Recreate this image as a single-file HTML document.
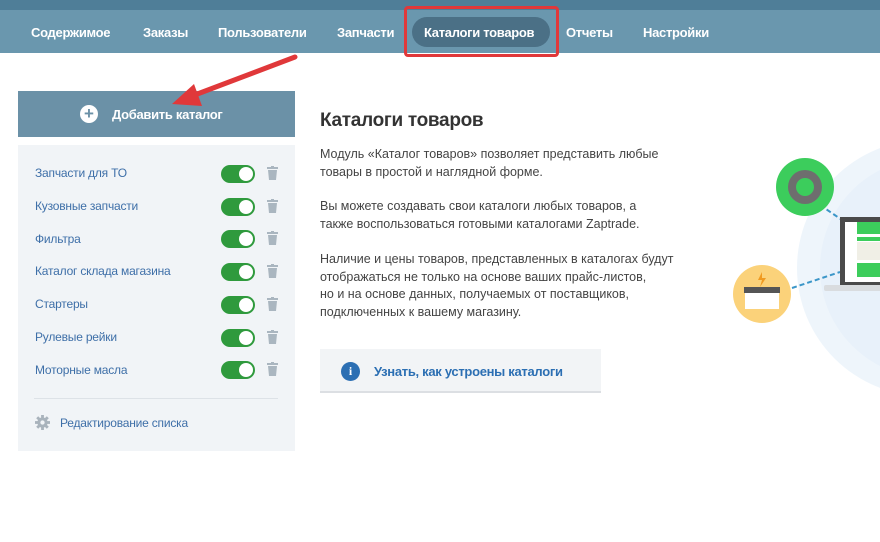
<!DOCTYPE html>
<html><head><meta charset="utf-8"><style>
*{margin:0;padding:0;box-sizing:border-box}
body{width:880px;height:542px;overflow:hidden;background:#fff;font-family:"Liberation Sans",sans-serif;position:relative}
.top{position:absolute;left:0;top:0;width:880px;height:10px;background:#4f7e98}
.nav{position:absolute;left:0;top:10px;width:880px;height:43px;background:#6a97ae}
.nav span{position:absolute;top:15px;color:#fff;font-weight:bold;font-size:13px;letter-spacing:-0.3px}
.pill{position:absolute;left:412px;top:7px;width:138px;height:30px;border-radius:15px;background:#4b7086}
.redbox{position:absolute;left:404px;top:6px;width:155px;height:51px;border:3px solid #e0383a;border-radius:4px}
.addbtn{position:absolute;left:18px;top:91px;width:277px;height:46px;background:#6b91a7;color:#fff;font-weight:bold;font-size:13px}
.addbtn .plus{position:absolute;left:62px;top:14px;width:18px;height:18px;border-radius:50%;background:#fff;color:#6b91a7;font-size:17px;line-height:18px;text-align:center}
.addbtn .t{position:absolute;left:94px;top:16px;letter-spacing:-0.3px}
.panel{position:absolute;left:18px;top:145px;width:277px;height:306px;background:#f1f4f7}
.item{position:absolute;left:17px;font-size:12px;color:#3e6fa8;letter-spacing:-0.2px}
.tg{position:absolute;left:203px;width:34px;height:18px;border-radius:9px;background:#2f9a3d}
.tg:after{content:"";position:absolute;right:2px;top:2px;width:14px;height:14px;border-radius:50%;background:#fff}
.tr{position:absolute;left:249px;width:11px;height:14px}
.sep{position:absolute;left:16px;top:253px;width:244px;height:1px;background:#dde2e7}
h1{position:absolute;left:320px;top:110px;font-size:19px;color:#333;font-weight:bold;letter-spacing:-0.3px}
.p{position:absolute;left:320px;font-size:12.5px;line-height:17.5px;color:#444;letter-spacing:0}
.info{position:absolute;left:320px;top:349px;width:281px;height:44px;background:#f2f4f6;border-bottom:2px solid #dcdfe3}
.info .i{position:absolute;left:21px;top:13px;width:19px;height:19px;border-radius:50%;background:#2c6fb3;color:#fff;font-weight:bold;font-size:12px;text-align:center;line-height:19px;font-family:"Liberation Serif",serif}
.info .t{position:absolute;left:54px;top:15px;color:#2c6fb3;font-weight:bold;font-size:13px;letter-spacing:-0.3px}
</style></head><body>
<div class="top"></div>
<div class="nav">
<div class="pill"></div>
<span style="left:31px">Содержимое</span>
<span style="left:143px">Заказы</span>
<span style="left:218px">Пользователи</span>
<span style="left:337px">Запчасти</span>
<span style="left:424px">Каталоги товаров</span>
<span style="left:566px">Отчеты</span>
<span style="left:643px">Настройки</span>
</div>
<div class="redbox"></div>
<svg style="position:absolute;left:0;top:0" width="880" height="542">
<circle cx="925" cy="268" r="128" fill="#eef5fb"/>
<circle cx="930" cy="268" r="110" fill="#e8f1fa"/>
<line x1="820" y1="205" x2="845" y2="222" stroke="#3b96c8" stroke-width="2" stroke-dasharray="5,3"/>
<line x1="792" y1="288" x2="840" y2="272" stroke="#3b96c8" stroke-width="2" stroke-dasharray="5,3"/>
<circle cx="805" cy="187" r="29" fill="#3ccd5c"/>
<circle cx="805" cy="187" r="17" fill="#6e6e6e"/>
<circle cx="805" cy="187" r="9" fill="#3ccd5c"/>
<circle cx="762" cy="294" r="29" fill="#fbd27a"/>
<rect x="744" y="287" width="36" height="6" fill="#555"/>
<rect x="745" y="293" width="34" height="16" fill="#fff"/>
<path d="M762 272 l-4 8 h4 l-2 7 l6 -9 h-4 z" fill="#f09a20"/>
<rect x="840" y="217" width="50" height="70" fill="#4a4a4a"/>
<rect x="845" y="222" width="45" height="60" fill="#fff"/>
<rect x="857" y="222" width="33" height="12" fill="#3ccd5c"/>
<rect x="857" y="237" width="33" height="4" fill="#3ccd5c"/>
<rect x="857" y="242" width="33" height="18" fill="#f0efe6"/>
<rect x="857" y="263" width="33" height="14" fill="#3ccd5c"/>
<rect x="824" y="285" width="60" height="6" rx="2" fill="#d9dcdf"/>
</svg>
<div class="addbtn"><div class="plus">+</div><div class="t">Добавить каталог</div></div>
<svg style="position:absolute;left:0;top:0" width="320" height="130">
<path d="M295 57 L192 96" stroke="#e0383a" stroke-width="5" stroke-linecap="round"/>
<path d="M172 104 L194 84 L202 106 Z" fill="#e0383a"/>
</svg>
<div class="panel">
<div class="item" style="top:21px">Запчасти для ТО</div>
<div class="item" style="top:54px">Кузовные запчасти</div>
<div class="item" style="top:87px">Фильтра</div>
<div class="item" style="top:119px">Каталог склада магазина</div>
<div class="item" style="top:152px">Стартеры</div>
<div class="item" style="top:185px">Рулевые рейки</div>
<div class="item" style="top:218px">Моторные масла</div>
<div class="tg" style="top:20px"></div><div class="tg" style="top:53px"></div><div class="tg" style="top:85px"></div><div class="tg" style="top:118px"></div><div class="tg" style="top:151px"></div><div class="tg" style="top:184px"></div><div class="tg" style="top:216px"></div>
<svg class="tr" style="top:21px" viewBox="0 0 11 14"><rect x="0" y="1" width="11" height="2" fill="#aab6c0"/><rect x="4" y="0" width="3" height="2" fill="#aab6c0"/><path d="M1 4h9l-1 10H2z" fill="#aab6c0"/></svg>
<svg class="tr" style="top:54px" viewBox="0 0 11 14"><rect x="0" y="1" width="11" height="2" fill="#aab6c0"/><rect x="4" y="0" width="3" height="2" fill="#aab6c0"/><path d="M1 4h9l-1 10H2z" fill="#aab6c0"/></svg>
<svg class="tr" style="top:86px" viewBox="0 0 11 14"><rect x="0" y="1" width="11" height="2" fill="#aab6c0"/><rect x="4" y="0" width="3" height="2" fill="#aab6c0"/><path d="M1 4h9l-1 10H2z" fill="#aab6c0"/></svg>
<svg class="tr" style="top:119px" viewBox="0 0 11 14"><rect x="0" y="1" width="11" height="2" fill="#aab6c0"/><rect x="4" y="0" width="3" height="2" fill="#aab6c0"/><path d="M1 4h9l-1 10H2z" fill="#aab6c0"/></svg>
<svg class="tr" style="top:152px" viewBox="0 0 11 14"><rect x="0" y="1" width="11" height="2" fill="#aab6c0"/><rect x="4" y="0" width="3" height="2" fill="#aab6c0"/><path d="M1 4h9l-1 10H2z" fill="#aab6c0"/></svg>
<svg class="tr" style="top:185px" viewBox="0 0 11 14"><rect x="0" y="1" width="11" height="2" fill="#aab6c0"/><rect x="4" y="0" width="3" height="2" fill="#aab6c0"/><path d="M1 4h9l-1 10H2z" fill="#aab6c0"/></svg>
<svg class="tr" style="top:217px" viewBox="0 0 11 14"><rect x="0" y="1" width="11" height="2" fill="#aab6c0"/><rect x="4" y="0" width="3" height="2" fill="#aab6c0"/><path d="M1 4h9l-1 10H2z" fill="#aab6c0"/></svg>
<div class="sep"></div>
<svg style="position:absolute;left:17px;top:270px" width="15" height="15" viewBox="0 0 16 16"><g fill="#a9b3bc"><circle cx="8" cy="8" r="5.5"/><rect x="6.5" y="0" width="3" height="16"/><rect x="0" y="6.5" width="16" height="3"/><rect x="6.5" y="0" width="3" height="16" transform="rotate(45 8 8)"/><rect x="6.5" y="0" width="3" height="16" transform="rotate(-45 8 8)"/></g><circle cx="8" cy="8" r="2.3" fill="#f1f4f7"/></svg>
<div class="item" style="top:271px;left:42px">Редактирование списка</div>
</div>
<h1>Каталоги товаров</h1>
<div class="p" style="top:146px">Модуль «Каталог товаров» позволяет представить любые<br>товары в простой и наглядной форме.</div>
<div class="p" style="top:198px">Вы можете создавать свои каталоги любых товаров, а<br>также воспользоваться готовыми каталогами Zaptrade.</div>
<div class="p" style="top:251px">Наличие и цены товаров, представленных в каталогах будут<br>отображаться не только на основе ваших прайс-листов,<br>но и на основе данных, получаемых от поставщиков,<br>подключенных к вашему магазину.</div>
<div class="info"><div class="i">i</div><div class="t">Узнать, как устроены каталоги</div></div>
</body></html>
